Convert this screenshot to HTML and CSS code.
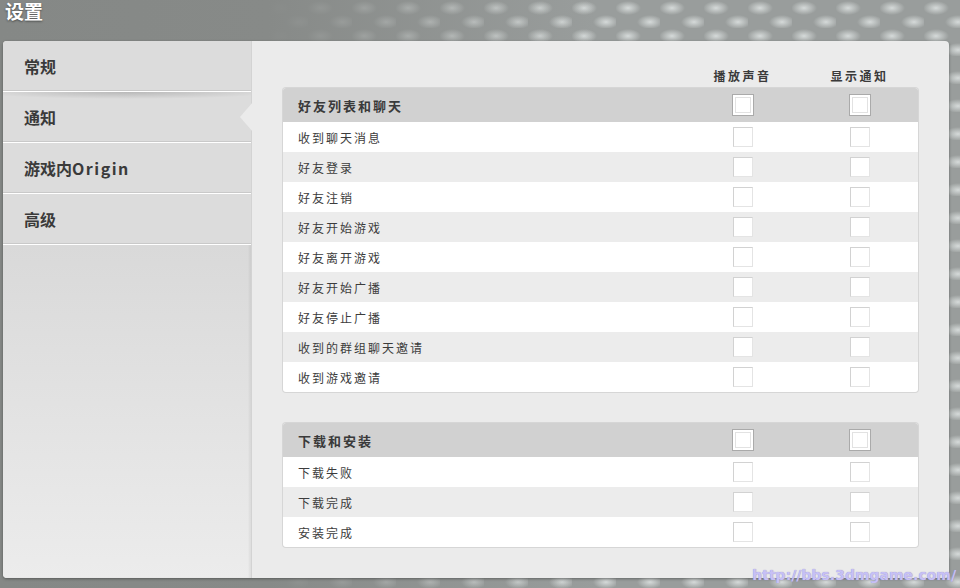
FILE: index.html
```html
<!DOCTYPE html>
<html lang="zh-CN">
<head>
    <meta charset="UTF-8">
    <meta name="viewport" content="width=device-width, initial-scale=1.0">
    <title>设置</title>
    <link rel="stylesheet" href="styles.css">
</head>
<body>

    <h1 class="title">设置</h1>

    <div class="panel">
        <ul class="sidebar">
            <li class="nav-item">常规</li>
            <li class="nav-item active">通知</li>
            <li class="nav-item">游戏内<span class="latin">Origin</span></li>
            <li class="nav-item">高级</li>
        </ul>

        <div class="content">
            <div class="col-heads">
                <span></span>
                <span class="col-head">播放声音</span>
                <span class="col-head">显示通知</span>
            </div>

            <div class="group">
                <div class="row head">
                    <span class="label">好友列表和聊天</span>
                    <span class="cell"><span class="box big"></span></span>
                    <span class="cell"><span class="box big"></span></span>
                </div>
                <div class="row">
                    <span class="label">收到聊天消息</span>
                    <span class="cell"><span class="box"></span></span>
                    <span class="cell"><span class="box"></span></span>
                </div>
                <div class="row">
                    <span class="label">好友登录</span>
                    <span class="cell"><span class="box"></span></span>
                    <span class="cell"><span class="box"></span></span>
                </div>
                <div class="row">
                    <span class="label">好友注销</span>
                    <span class="cell"><span class="box"></span></span>
                    <span class="cell"><span class="box"></span></span>
                </div>
                <div class="row">
                    <span class="label">好友开始游戏</span>
                    <span class="cell"><span class="box"></span></span>
                    <span class="cell"><span class="box"></span></span>
                </div>
                <div class="row">
                    <span class="label">好友离开游戏</span>
                    <span class="cell"><span class="box"></span></span>
                    <span class="cell"><span class="box"></span></span>
                </div>
                <div class="row">
                    <span class="label">好友开始广播</span>
                    <span class="cell"><span class="box"></span></span>
                    <span class="cell"><span class="box"></span></span>
                </div>
                <div class="row">
                    <span class="label">好友停止广播</span>
                    <span class="cell"><span class="box"></span></span>
                    <span class="cell"><span class="box"></span></span>
                </div>
                <div class="row">
                    <span class="label">收到的群组聊天邀请</span>
                    <span class="cell"><span class="box"></span></span>
                    <span class="cell"><span class="box"></span></span>
                </div>
                <div class="row">
                    <span class="label">收到游戏邀请</span>
                    <span class="cell"><span class="box"></span></span>
                    <span class="cell"><span class="box"></span></span>
                </div>
            </div>

            <div class="group">
                <div class="row head">
                    <span class="label">下载和安装</span>
                    <span class="cell"><span class="box big"></span></span>
                    <span class="cell"><span class="box big"></span></span>
                </div>
                <div class="row">
                    <span class="label">下载失败</span>
                    <span class="cell"><span class="box"></span></span>
                    <span class="cell"><span class="box"></span></span>
                </div>
                <div class="row">
                    <span class="label">下载完成</span>
                    <span class="cell"><span class="box"></span></span>
                    <span class="cell"><span class="box"></span></span>
                </div>
                <div class="row">
                    <span class="label">安装完成</span>
                    <span class="cell"><span class="box"></span></span>
                    <span class="cell"><span class="box"></span></span>
                </div>
            </div>
        </div>
    </div>

    <div class="watermark">http://bbs.3dmgame.com/</div>

</body>
</html>
```

FILE: styles.css
```css
body {
    margin: 0;
    height: 588px;
    overflow: hidden;
    font-family: "Noto Sans CJK SC", "Noto Sans", sans-serif;
    background:
        linear-gradient(to right, #858886 0, #878a88 28%, rgba(135, 138, 136, 0) 62%),
        radial-gradient(13px 7px at 12px 8px, rgba(220, 225, 224, 0.9), rgba(220, 225, 224, 0)),
        radial-gradient(13px 7px at 34px 22px, rgba(220, 225, 224, 0.9), rgba(220, 225, 224, 0)),
        #999d9c;
    background-size: 100% 100%, 44px 28px, 44px 28px;
    position: relative;
}

.title {
    margin: 0;
    height: 40px;
    padding: 1px 0 0 5px;
    font-size: 19px;
    line-height: 20px;
    font-weight: bold;
    color: #fff;
    text-shadow: 0 1px 2px rgba(0, 0, 0, 0.45);
}

.panel {
    display: flex;
    margin: 0 11px 0 3px;
    height: 537px;
    border-radius: 4px;
    overflow: hidden;
    box-shadow: 0 1px 3px rgba(0, 0, 0, 0.35);
    background: #ebebeb;
}

.sidebar {
    list-style: none;
    margin: 0;
    padding: 0;
    width: 248px;
    border-right: 1px solid #d3d3d3;
    background: linear-gradient(#d9d9d9 0, #d9d9d9 204px, #ececec 100%);
    box-shadow: inset -2px 0 2px rgba(0, 0, 0, 0.05);
}

.nav-item {
    position: relative;
    height: 50px;
    line-height: 50px;
    padding-left: 21px;
    font-size: 16px;
    font-weight: bold;
    color: #3a3a3a;
    background: #dcdcdc;
    border-bottom: 1px solid #fff;
    box-shadow: inset 0 -1px 0 #c9c9c9;
}

.nav-item .latin {
    letter-spacing: 1.5px;
}

.nav-item.active {
    background:
        radial-gradient(60% 7px at 50% 0, rgba(0, 0, 0, 0.16), rgba(0, 0, 0, 0)),
        #dcdcdc;
}

.nav-item.active::after {
    content: "";
    position: absolute;
    right: -2px;
    top: 10px;
    border-style: solid;
    border-width: 15px 13px 15px 0;
    border-color: transparent #ebebeb transparent transparent;
}

.content {
    flex: 1;
    padding: 26px 31px 0;
}

.col-heads,
.row {
    display: grid;
    grid-template-columns: 1fr 117px 117px;
    align-items: center;
}

.col-heads {
    height: 16px;
    margin-bottom: 5px;
}

.col-head {
    text-align: center;
    font-size: 12px;
    font-weight: bold;
    letter-spacing: 2.5px;
    color: #3a3a3a;
}

.group {
    margin-bottom: 31px;
    border-radius: 3px;
    overflow: hidden;
    background: #fff;
    box-shadow: 0 0 0 1px #d6d6d6;
}

.row {
    height: 30px;
    font-size: 12px;
    letter-spacing: 2px;
    color: #3c3c3c;
}

.row:nth-child(odd) {
    background: #ececec;
}

.row.head {
    height: 34px;
    background: #d1d1d1;
    font-size: 13px;
    font-weight: bold;
    color: #3a3a3a;
}

.label {
    padding-left: 15px;
}

.cell {
    display: flex;
    justify-content: center;
}

.box {
    width: 18px;
    height: 18px;
    background: #fff;
    border: 1px solid #e4e4e4;
    border-top-color: #d2d2d2;
    border-left-color: #d2d2d2;
}

.box.big {
    width: 20px;
    height: 20px;
    border: 1px solid #aaa;
    box-shadow: inset 0 0 0 2px #fff, inset 0 0 0 3px #e2e2e2;
}

.watermark {
    position: absolute;
    right: 4px;
    bottom: 5px;
    font-family: "DejaVu Sans", sans-serif;
    font-size: 14px;
    font-weight: bold;
    color: #c7c0f5;
    text-shadow: 0 0 1px #8c86c0;
}
```
